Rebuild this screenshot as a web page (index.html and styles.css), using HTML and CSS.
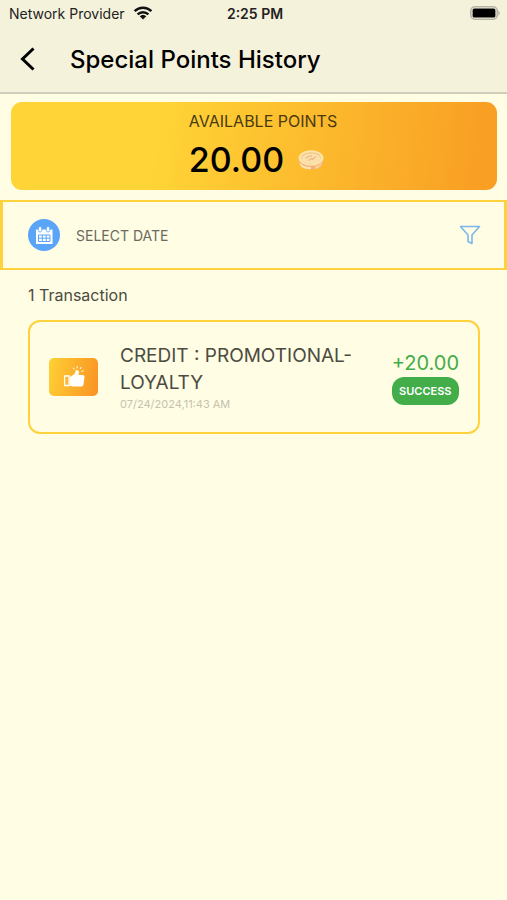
FILE: index.html
```html
<!DOCTYPE html>
<html lang="en">
<head>
	<meta charset="UTF-8">
	<meta name="viewport" content="width=device-width, initial-scale=1">
	<title>Special Points History</title>
	<link rel="stylesheet" href="styles.css">
</head>
<body>
	<header class="header">
		<div class="status">
			<div class="status_left">
				<span>Network Provider</span>
				<svg width="20" height="14" viewBox="0 0 20 14">
					<path d="M1.6 5.2a12 12 0 0 1 16.8 0M4.6 8.3a7.8 7.8 0 0 1 10.8 0" fill="none" stroke="#111" stroke-width="2.5"/>
					<path d="M6.7 10.2a4.8 4.8 0 0 1 6.6 0L10 13.6z" fill="#111"/>
				</svg>
			</div>
			<div class="status_time">2:25 PM</div>
			<div class="status_right">
				<svg width="31" height="14" viewBox="0 0 31 14">
					<rect x="0.8" y="0.8" width="26.4" height="12.4" rx="4" fill="none" stroke="#b5b4a6" stroke-width="1.6"/>
					<rect x="2.6" y="2.6" width="22.8" height="8.8" rx="1.5" fill="#000"/>
					<path d="M28.4 4.2q3 2.8 0 5.6z" fill="#b5b4a6"/>
				</svg>
			</div>
		</div>
		<div class="navbar">
			<button type="button" class="back" aria-label="Back">
				<svg width="16" height="24" viewBox="0 0 16 24">
					<path d="M13.5 1.5L2.5 12l11 10.5" fill="none" stroke="#000" stroke-width="3"/>
				</svg>
			</button>
			<h1 class="title">Special Points History</h1>
		</div>
	</header>
	<main>
		<section class="points">
			<div class="points_inner">
				<h2 class="points_label">AVAILABLE POINTS</h2>
				<div class="points_value">
					<span>20.00</span>
					<svg width="26" height="20" viewBox="0 0 26 20">
						<path d="M.5 8l1 6c1 3.5 5.5 5.5 11.500 5.500s10.500-2 11.500-5.500l1-6z" fill="#f3b274"/>
						<path d="M1.500 12.500q4 4.500 11.500 4.500v2.300q-8.500 0-11-4.300z" fill="#fbe0b0"/>
						<path d="M17 16.500q4.500-1 7-4l-.5 2.500q-2 3-6.500 4z" fill="#f9cf9b"/>
						<ellipse cx="13" cy="8" rx="12.500" ry="7.700" fill="#fce3a8"/>
						<ellipse cx="13" cy="7.800" rx="9.800" ry="5.600" fill="#f2c284"/>
						<ellipse cx="13" cy="8.600" rx="9.400" ry="5" fill="#fbe0ac"/>
						<path d="M8 8.500q2.500-3 6-2.500M10.500 10.500l3-2 1 1 3.500-3" fill="none" stroke="#ebb880" stroke-width="1.200"/>
					</svg>
				</div>
			</div>
		</section>
		<section class="filter">
			<button type="button" class="date">
				<svg width="32" height="32" viewBox="0 0 32 32">
					<circle cx="16" cy="16" r="16" fill="#5aa5f8"/>
					<path d="M8 10.5h16.5V25H8z" fill="#fff"/>
					<rect x="10.5" y="7.500" width="3.200" height="5.500" rx="1.600" fill="#fff" stroke="#5aa5f8" stroke-width=".8"/>
					<rect x="18.5" y="7.500" width="3.200" height="5.500" rx="1.600" fill="#fff" stroke="#5aa5f8" stroke-width=".8"/>
					<path d="M10.500 16h11.500v6.500H10.500zM10.500 19.200h11.500M14.300 16v6.500M18.200 16v6.500" fill="none" stroke="#5aa5f8" stroke-width="1"/>
				</svg>
				<span>SELECT DATE</span>
			</button>
			<button type="button" class="funnel" aria-label="Filter">
				<svg width="22" height="20" viewBox="0 0 22 20">
					<path d="M1.5 1.500h19l-7.500 8.500v8.500l-4-2V10z" fill="none" stroke="#7eb6ec" stroke-width="1.6" stroke-linejoin="round"/>
				</svg>
			</button>
		</section>
		<section class="history">
			<h2 class="count">1 Transaction</h2>
			<article class="card">
				<div class="card_icon">
					<svg width="22" height="22" viewBox="0 0 22 22">
						<path d="M1.600 10h4.500v9.500H1.600z" fill="none" stroke="#fff" stroke-width="1.300"/>
						<path d="M7 11l4.500-3 1.500-4q3-.3 3 2.500l-.5 2.500h4.500q1.500.2 1.500 1.500l-1 8q-.5 2-2 2h-8.500l-3-1z" fill="#fff"/>
						<path d="M14.200 0v2.300M10.300 1.800l1 1.700M18.300 1l-1.200 2M20.600 4.700l-2.400.9" fill="none" stroke="#fff" stroke-width="1"/>
					</svg>
				</div>
				<div class="card_text">
					<h3 class="card_title">CREDIT : PROMOTIONAL-LOYALTY</h3>
					<time class="card_time">07/24/2024,11:43 AM</time>
				</div>
				<div class="card_amount">
					<span class="amount">+20.00</span>
					<span class="badge">SUCCESS</span>
				</div>
			</article>
		</section>
	</main>
</body>
</html>
```

FILE: styles.css
```css
body{
	margin: 0;
	background: #fffde3;
	color: #000;
	font-family: Inter, "Liberation Sans", sans-serif;
}
h1,h2,h3{
	margin: 0;
	font-weight: 400;
}
button{
	padding: 0;
	border: none;
	background: transparent;
	font-family: inherit;
	cursor: pointer;
}
svg{
	display: block;
}

/* header */
.header{
	background: #f5f2dc;
	border-bottom: 2px solid #d0cdba;
}
.status{
	display: grid;
	grid-template-columns: 1fr auto 1fr;
	align-items: center;
	height: 26px;
	padding: 0 6px 0 9px;
	font-size: 14px;
	color: #222;
}
.status_left{
	display: flex;
	align-items: center;
	gap: 8px;
}
.status_time{
	font-weight: 600;
}
.status_right{
	justify-self: end;
}
.navbar{
	display: flex;
	align-items: center;
	gap: 34px;
	height: 66px;
	padding: 0 20px;
}
.title{
	font-size: 24px;
	font-weight: 500;
}

/* points banner */
.points{
	display: flex;
	justify-content: center;
	margin: 8px 10px 10px 11px;
	padding: 8px 0 2px 18px;
	border-radius: 11px;
	background: linear-gradient(97deg, #ffd436 30%, #f9a024 95%);
}
.points_label{
	font-size: 16px;
	line-height: 22px;
	color: #4a3a10;
}
.points_value{
	display: flex;
	align-items: center;
	gap: 14px;
	font-size: 34px;
	font-weight: 500;
	line-height: 56px;
}

/* date filter */
.filter{
	display: flex;
	align-items: center;
	justify-content: space-between;
	padding: 17px 23px 17px 25px;
	border: solid #fdd23c;
	border-width: 2px 3px;
}
.date{
	display: flex;
	align-items: center;
	gap: 16px;
	font-size: 14px;
	color: #6b6a60;
}

/* transactions */
.history{
	padding: 13px 27px 0 28px;
}
.count{
	font-size: 16px;
	line-height: 24px;
	color: #4c4b42;
}
.card{
	display: flex;
	align-items: center;
	margin-top: 13px;
	padding: 20px 19px;
	border: 2px solid #fdd23c;
	border-radius: 12px;
}
.card_icon{
	display: flex;
	align-items: center;
	justify-content: center;
	width: 49px;
	height: 38px;
	border-radius: 5px;
	background: linear-gradient(100deg, #ffd034, #f99324);
}
.card_text{
	flex: 1;
	padding: 0 22px;
}
.card_title{
	font-size: 19px;
	line-height: 27px;
	color: #4c4b42;
}
.card_time{
	display: block;
	font-size: 11px;
	line-height: 16px;
	color: #c5c3b0;
}
.card_amount{
	display: flex;
	flex-direction: column;
	align-items: center;
}
.amount{
	font-size: 20px;
	line-height: 28px;
	color: #43ad4a;
}
.badge{
	padding: 0 7px;
	border-radius: 12px;
	background: #43ad4a;
	color: #fff;
	font-size: 11px;
	font-weight: 600;
	line-height: 28px;
}
```
